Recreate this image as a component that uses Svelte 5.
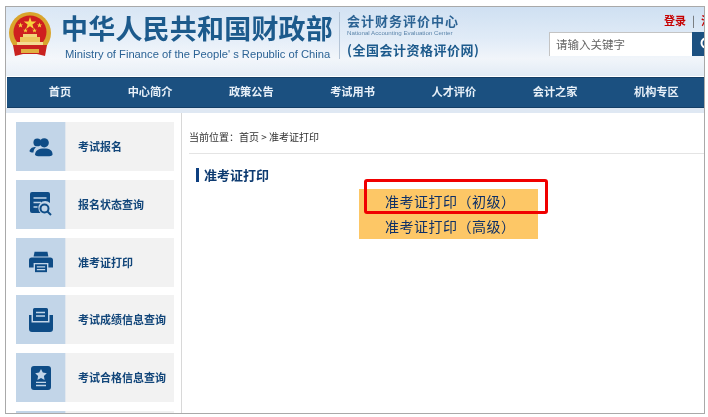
<script>
  const nav = ['首页', '中心简介', '政策公告', '考试用书', '人才评价', '会计之家', '机构专区'];
  const side = [
    { label: '考试报名', icon: 'users' },
    { label: '报名状态查询', icon: 'search' },
    { label: '准考证打印', icon: 'printer' },
    { label: '考试成绩信息查询', icon: 'tray' },
    { label: '考试合格信息查询', icon: 'badge' },
    { label: '', icon: '' }
  ];
</script>

<div class="frame">
  <header class="header">
    <svg class="emblem" viewBox="0 0 44 46" aria-hidden="true">
      <circle cx="22" cy="21" r="21" fill="#d9a52c" />
      <circle cx="22" cy="20" r="16.5" fill="#cf1f1f" />
      <polygon fill="#f7d23e" points="22,5 23.5,9.6 28.3,9.6 24.4,12.4 25.9,17 22,14.2 18.1,17 19.6,12.4 15.7,9.6 20.5,9.6" />
      <polygon fill="#f7d23e" points="12.5,10.5 13.2,12.4 15.2,12.4 13.6,13.6 14.2,15.5 12.5,14.4 10.8,15.5 11.4,13.6 9.8,12.4 11.8,12.4" />
      <polygon fill="#f7d23e" points="31.5,10.5 32.2,12.4 34.2,12.4 32.6,13.6 33.2,15.5 31.5,14.4 29.8,15.5 30.4,13.6 28.8,12.4 30.8,12.4" />
      <polygon fill="#f7d23e" points="17.5,16 18.1,17.7 19.9,17.7 18.5,18.8 19,20.5 17.5,19.5 16,20.5 16.5,18.8 15.1,17.7 16.9,17.7" />
      <polygon fill="#f7d23e" points="26.5,16 27.1,17.7 28.9,17.7 27.5,18.8 28,20.5 26.5,19.5 25,20.5 25.5,18.8 24.1,17.7 25.9,17.7" />
      <rect x="15" y="22" width="14" height="3" fill="#f2d37a" />
      <rect x="12" y="25" width="20" height="5" fill="#edc55c" />
      <rect x="9" y="30" width="26" height="3" fill="#f4dc92" />
      <path d="M5 33 L39 33 L37 44 L29 42 H15 L7 44 Z" fill="#c9221f" />
      <rect x="13" y="37" width="18" height="4" fill="#e0b040" />
    </svg>
    <div class="ministry">
      <div class="ministry-cn">中华人民共和国财政部</div>
      <div class="ministry-en">Ministry of Finance of the People' s Republic of China</div>
    </div>
    <div class="center">
      <div class="center-cn">会计财务评价中心</div>
      <div class="center-en">National Accounting Evaluation Center</div>
      <div class="center-net">(全国会计资格评价网)</div>
    </div>
    <div class="tools">
      <div class="links"><span>登录</span><i>|</i><span>注册</span></div>
      <div class="search">
        <div class="input">请输入关键字</div>
        <div class="go">
          <svg viewBox="0 0 16 16" aria-hidden="true"><circle cx="7" cy="7" r="4.5" fill="none" stroke="#fff" stroke-width="2" /><path d="M10.5 10.5 14 14" stroke="#fff" stroke-width="2" /></svg>
        </div>
      </div>
    </div>
  </header>

  <nav class="nav">
    {#each nav as item}
      <span>{item}</span>
    {/each}
  </nav>
  <div class="band"></div>

  <div class="body">
    <aside class="side">
      {#each side as s}
        <div class="tile">
          <div class="tile-icon">
            {#if s.icon === 'users'}
              <svg viewBox="0 0 26 22" aria-hidden="true">
                <circle cx="9" cy="6" r="4.2" fill="#0e4c86" />
                <path d="M0.5 15.5C1.5 12 4 11 7.5 11 5.5 13 5 15 4.8 17 2.5 17 1 16.5.5 15.5Z" fill="#0e4c86" />
                <circle cx="16.5" cy="6.5" r="5" fill="#0e4c86" />
                <path d="M6.5 19C7 14.5 10.5 12.5 16.5 12.5S25.5 14.5 25.5 19C25.5 20.5 23 21 16 21S6.5 20.5 6.5 19Z" fill="#0e4c86" />
              </svg>
            {:else if s.icon === 'search'}
              <svg viewBox="0 0 22 24" aria-hidden="true">
                <path d="M2 0H18A2 2 0 0 1 20 2V11A6.5 6.5 0 0 0 10.5 21H2A2 2 0 0 1 0 19V2A2 2 0 0 1 2 0Z" fill="#0e4c86" />
                <path d="M3.5 6H16.5M3.5 10.5H11M3.5 15H7.5" stroke="#c2d5e8" stroke-width="1.6" />
                <circle cx="14.5" cy="16.5" r="4" fill="none" stroke="#0e4c86" stroke-width="2" />
                <path d="M17.5 19.5 21 23" stroke="#0e4c86" stroke-width="2" />
              </svg>
            {:else if s.icon === 'printer'}
              <svg viewBox="0 0 26 22" aria-hidden="true">
                <path d="M6 0H20L21 5H5Z" fill="#0e4c86" />
                <path d="M3 6H23A3 3 0 0 1 26 9V17H21V12H5V17H0V9A3 3 0 0 1 3 6Z" fill="#0e4c86" />
                <rect x="6.5" y="13.5" width="13" height="8.5" fill="#0e4c86" />
                <path d="M8.5 16.3H17.5M8.5 19.3H17.5" stroke="#c2d5e8" stroke-width="1.4" />
              </svg>
            {:else if s.icon === 'tray'}
              <svg viewBox="0 0 24 24" aria-hidden="true">
                <path d="M5.5 0H17.5A1.5 1.5 0 0 1 19 1.5V13H4V1.5A1.5 1.5 0 0 1 5.5 0Z" fill="#0e4c86" />
                <path d="M7 4.5H16M7 8H16" stroke="#c2d5e8" stroke-width="1.4" />
                <path d="M0 7H2.5V14.5H20.5V7H24V21A3 3 0 0 1 21 24H3A3 3 0 0 1 0 21Z" fill="#0e4c86" />
              </svg>
            {:else if s.icon === 'badge'}
              <svg viewBox="0 0 20 24" aria-hidden="true">
                <rect width="20" height="24" rx="3" fill="#0e4c86" />
                <polygon fill="#c2d5e8" points="10,3 11.8,6.6 15.8,7.2 12.9,10 13.6,14 10,12.1 6.4,14 7.1,10 4.2,7.2 8.2,6.6" />
                <path d="M5 16.3H15M5 19.5H15" stroke="#c2d5e8" stroke-width="1.3" />
              </svg>
            {/if}
          </div>
          <div class="tile-label">{s.label}</div>
        </div>
      {/each}
    </aside>

    <main class="main">
      <div class="crumb">当前位置：首页 &gt; 准考证打印</div>
      <div class="title">准考证打印</div>
      <div class="buttons">
        <div class="btn">准考证打印（初级）</div>
        <div class="btn">准考证打印（高级）</div>
        <div class="highlight"></div>
      </div>
    </main>
  </div>
</div>

<style>
  :global(body) {
    margin: 0;
    background: #fff;
  }
  .frame {
    box-sizing: border-box;
    width: 700px;
    height: 408px;
    margin: 6px 0 0 5px;
    border: 1px solid #a9a9a9;
    overflow: hidden;
    font-family: "Noto Sans CJK SC", "Liberation Sans", sans-serif;
    background: #fff;
    filter: blur(0.3px);
  }
  .header {
    display: flex;
    height: 69px;
    background:
      linear-gradient(90deg, rgba(255, 255, 255, 0.25) 0%, rgba(255, 255, 255, 0) 70%),
      linear-gradient(180deg, #cfe0f2 0%, #e0ebf7 45%, #f1f5fa 75%, #e2ebf5 100%);
  }
  .emblem {
    width: 44px;
    height: 46px;
    margin: 5px 0 0 2px;
    flex: none;
  }
  .ministry {
    margin-left: 10px;
    width: 274px;
    flex: none;
  }
  .ministry-cn {
    font-size: 27px;
    line-height: 34px;
    margin: 4px 0 0 -1px;
    font-weight: 700;
    color: #1c5a8c;
    white-space: nowrap;
    letter-spacing: 0.2px;
  }
  .ministry-en {
    font-family: "Liberation Sans", sans-serif;
    font-size: 11.2px;
    line-height: 14px;
    margin: 2px 0 0 3px;
    color: #2c6395;
    white-space: nowrap;
  }
  .center {
    margin: 5px 0 0 3px;
    padding-left: 7px;
    width: 190px;
    height: 47px;
    flex: none;
    border-left: 1px solid #b4c4d6;
  }
  .center-cn {
    font-size: 13px;
    line-height: 16px;
    font-weight: 700;
    letter-spacing: 1px;
    color: #2a6293;
    margin-top: 1px;
    white-space: nowrap;
  }
  .center-en {
    font-family: "Liberation Sans", sans-serif;
    font-size: 6.2px;
    line-height: 7px;
    color: #5d86ab;
    white-space: nowrap;
  }
  .center-net {
    font-size: 13px;
    line-height: 18px;
    margin-top: 5px;
    font-weight: 700;
    letter-spacing: 0.5px;
    color: #1c5a8c;
    white-space: nowrap;
  }
  .tools {
    margin-left: 12px;
    flex: none;
    width: 160px;
  }
  .links {
    display: flex;
    font-size: 11px;
    line-height: 16px;
    margin: 5px 0 0 115px;
    font-weight: 700;
    color: #c60000;
    white-space: nowrap;
  }
  .links i {
    font-style: normal;
    font-weight: 400;
    color: #555;
    margin: 0 6px;
  }
  .search {
    display: flex;
    margin-top: 4px;
    height: 24px;
  }
  .input {
    width: 143px;
    box-sizing: border-box;
    padding-left: 6px;
    font-size: 11.5px;
    line-height: 22px;
    color: #666;
    background: #fff;
    border: 1px solid #c4c4c4;
    border-width: 1px 0 0 1px;
    flex: none;
  }
  .go {
    width: 30px;
    flex: none;
    box-sizing: border-box;
    padding-left: 7px;
    background: #1b5080;
    display: flex;
    align-items: center;
  }
  .go svg {
    width: 16px;
    height: 16px;
    flex: none;
  }
  .nav {
    box-sizing: border-box;
    display: flex;
    height: 31px;
    margin: 1px 0 0 1px;
    padding-left: 13.5px;
    background: #1b5080;
    border-top: 1px solid #143e66;
    border-bottom: 1px solid #143e66;
    font-size: 11.2px;
    font-weight: 700;
    color: #e8f0f8;
    line-height: 27px;
    white-space: nowrap;
  }
  .nav span {
    flex: none;
    padding: 0 28.25px;
  }
  .band {
    height: 5px;
    background: #dfe8f3;
  }
  .body {
    display: flex;
    height: 300px;
  }
  .side {
    box-sizing: border-box;
    width: 176px;
    flex: none;
    height: 300px;
    padding: 9px 0 0 10px;
    border-right: 1px solid #d8d8d8;
    overflow: hidden;
  }
  .tile {
    display: flex;
    width: 158px;
    height: 49px;
    margin-bottom: 8.75px;
    background: #f2f2f2;
  }
  .tile-icon {
    width: 49px;
    height: 49px;
    flex: none;
    background: #c2d5e8;
    border-right: 1px solid #e2e8ef;
    display: flex;
    align-items: center;
    justify-content: center;
  }
  .tile-icon svg {
    height: 24px;
    width: 24px;
  }
  .tile-label {
    margin-left: 12px;
    font-size: 11px;
    font-weight: 700;
    line-height: 48px;
    color: #12467a;
    white-space: nowrap;
  }
  .main {
    flex: 1;
    min-width: 0;
  }
  .crumb {
    box-sizing: border-box;
    height: 41px;
    margin-left: 7px;
    padding-top: 16px;
    font-size: 10px;
    line-height: 16px;
    color: #333;
    border-bottom: 1px solid #e4e4e4;
  }
  .title {
    margin: 14px 0 0 14px;
    padding-left: 5px;
    height: 14px;
    border-left: 3px solid #0d3f80;
    font-size: 13px;
    font-weight: 700;
    line-height: 14px;
    color: #0d3a70;
  }
  .buttons {
    position: relative;
    width: 179px;
    margin: 7px 0 0 177px;
  }
  .btn {
    height: 25px;
    padding-left: 26px;
    background: #fdc766;
    font-size: 14px;
    line-height: 25px;
    letter-spacing: 0.5px;
    color: #0d2f66;
    white-space: nowrap;
  }
  .highlight {
    position: absolute;
    box-sizing: border-box;
    left: 5px;
    top: -10px;
    width: 184px;
    height: 35px;
    border: 3px solid #f00000;
    border-radius: 3px;
  }
</style>
